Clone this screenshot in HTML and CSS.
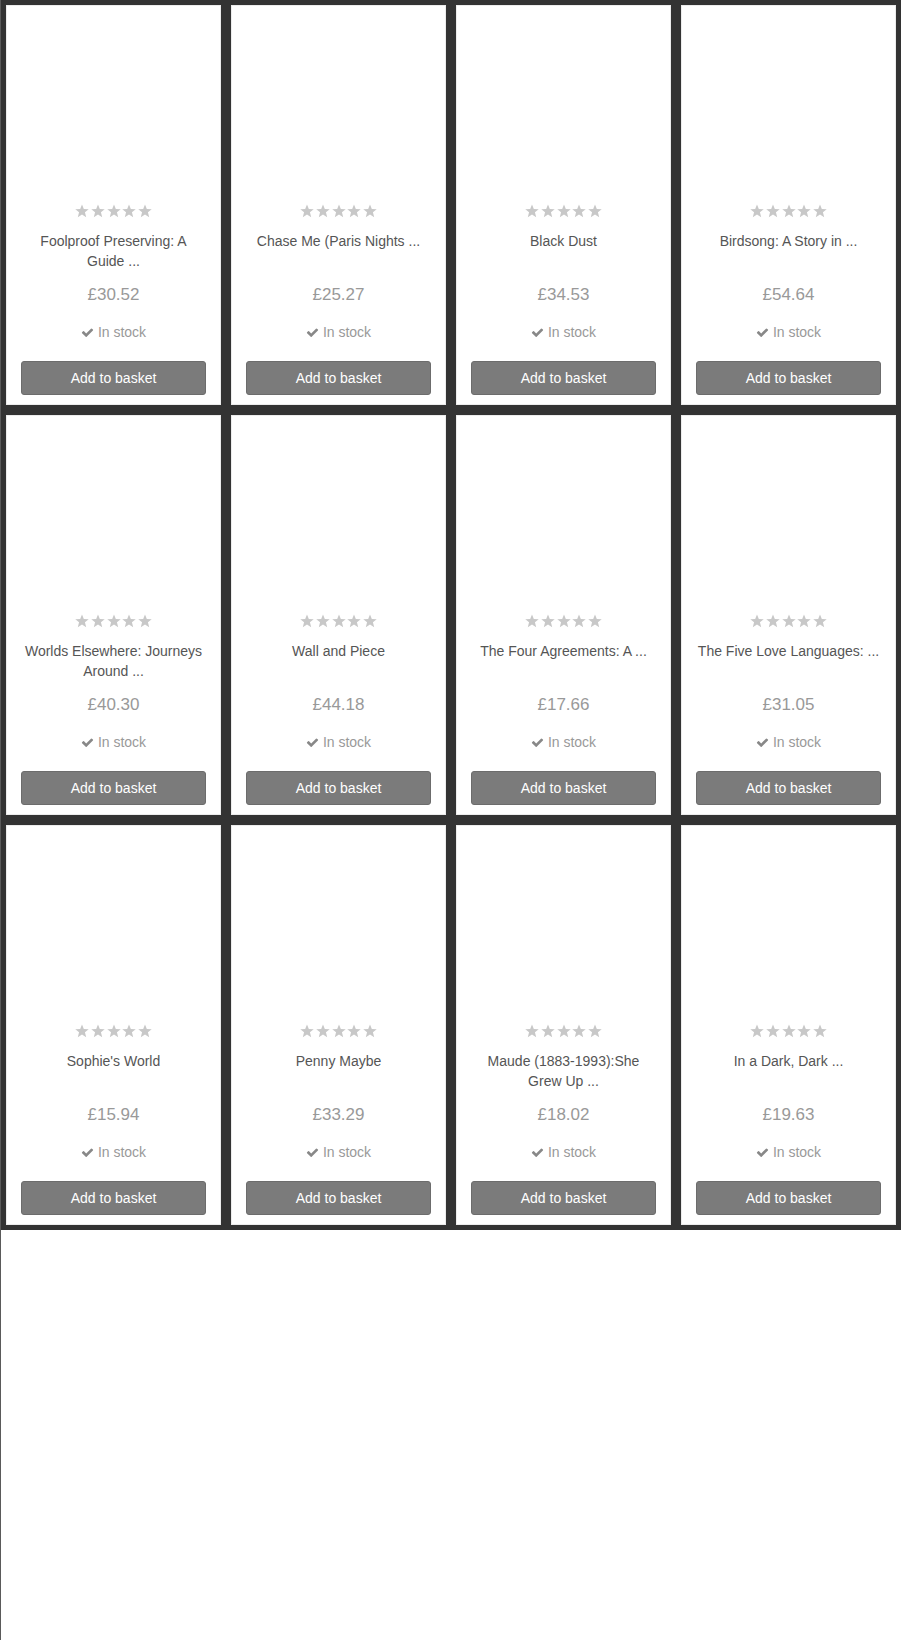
FILE: index.html
```html
<!DOCTYPE html>
<html lang="en">
<head>
<meta charset="utf-8">
<title>Books</title>
<link rel="stylesheet" href="styles.css">
</head>
<body>
<div class="page">
  <ol class="grid">
    <li class="card">
      <div class="stars"><svg viewBox="0 0 100 100"><polygon points="50,3 63,35 98,37 71,59 80,94 50,75 20,94 29,59 2,37 37,35"/></svg><svg viewBox="0 0 100 100"><polygon points="50,3 63,35 98,37 71,59 80,94 50,75 20,94 29,59 2,37 37,35"/></svg><svg viewBox="0 0 100 100"><polygon points="50,3 63,35 98,37 71,59 80,94 50,75 20,94 29,59 2,37 37,35"/></svg><svg viewBox="0 0 100 100"><polygon points="50,3 63,35 98,37 71,59 80,94 50,75 20,94 29,59 2,37 37,35"/></svg><svg viewBox="0 0 100 100"><polygon points="50,3 63,35 98,37 71,59 80,94 50,75 20,94 29,59 2,37 37,35"/></svg></div>
      <h3 class="title">Foolproof Preserving: A Guide ...</h3>
      <p class="price">£30.52</p>
      <p class="stock"><svg class="check" viewBox="0 0 1792 1792"><path d="M1671 566q0 40-28 68l-724 724-136 136q-28 28-68 28t-68-28l-136-136-362-362q-28-28-28-68t28-68l136-136q28-28 68-28t68 28l294 295 656-657q28-28 68-28t68 28l136 136q28 28 28 68z"/></svg>In stock</p>
      <button class="btn">Add to basket</button>
    </li>
    <li class="card">
      <div class="stars"><svg viewBox="0 0 100 100"><polygon points="50,3 63,35 98,37 71,59 80,94 50,75 20,94 29,59 2,37 37,35"/></svg><svg viewBox="0 0 100 100"><polygon points="50,3 63,35 98,37 71,59 80,94 50,75 20,94 29,59 2,37 37,35"/></svg><svg viewBox="0 0 100 100"><polygon points="50,3 63,35 98,37 71,59 80,94 50,75 20,94 29,59 2,37 37,35"/></svg><svg viewBox="0 0 100 100"><polygon points="50,3 63,35 98,37 71,59 80,94 50,75 20,94 29,59 2,37 37,35"/></svg><svg viewBox="0 0 100 100"><polygon points="50,3 63,35 98,37 71,59 80,94 50,75 20,94 29,59 2,37 37,35"/></svg></div>
      <h3 class="title">Chase Me (Paris Nights ...</h3>
      <p class="price">£25.27</p>
      <p class="stock"><svg class="check" viewBox="0 0 1792 1792"><path d="M1671 566q0 40-28 68l-724 724-136 136q-28 28-68 28t-68-28l-136-136-362-362q-28-28-28-68t28-68l136-136q28-28 68-28t68 28l294 295 656-657q28-28 68-28t68 28l136 136q28 28 28 68z"/></svg>In stock</p>
      <button class="btn">Add to basket</button>
    </li>
    <li class="card">
      <div class="stars"><svg viewBox="0 0 100 100"><polygon points="50,3 63,35 98,37 71,59 80,94 50,75 20,94 29,59 2,37 37,35"/></svg><svg viewBox="0 0 100 100"><polygon points="50,3 63,35 98,37 71,59 80,94 50,75 20,94 29,59 2,37 37,35"/></svg><svg viewBox="0 0 100 100"><polygon points="50,3 63,35 98,37 71,59 80,94 50,75 20,94 29,59 2,37 37,35"/></svg><svg viewBox="0 0 100 100"><polygon points="50,3 63,35 98,37 71,59 80,94 50,75 20,94 29,59 2,37 37,35"/></svg><svg viewBox="0 0 100 100"><polygon points="50,3 63,35 98,37 71,59 80,94 50,75 20,94 29,59 2,37 37,35"/></svg></div>
      <h3 class="title">Black Dust</h3>
      <p class="price">£34.53</p>
      <p class="stock"><svg class="check" viewBox="0 0 1792 1792"><path d="M1671 566q0 40-28 68l-724 724-136 136q-28 28-68 28t-68-28l-136-136-362-362q-28-28-28-68t28-68l136-136q28-28 68-28t68 28l294 295 656-657q28-28 68-28t68 28l136 136q28 28 28 68z"/></svg>In stock</p>
      <button class="btn">Add to basket</button>
    </li>
    <li class="card">
      <div class="stars"><svg viewBox="0 0 100 100"><polygon points="50,3 63,35 98,37 71,59 80,94 50,75 20,94 29,59 2,37 37,35"/></svg><svg viewBox="0 0 100 100"><polygon points="50,3 63,35 98,37 71,59 80,94 50,75 20,94 29,59 2,37 37,35"/></svg><svg viewBox="0 0 100 100"><polygon points="50,3 63,35 98,37 71,59 80,94 50,75 20,94 29,59 2,37 37,35"/></svg><svg viewBox="0 0 100 100"><polygon points="50,3 63,35 98,37 71,59 80,94 50,75 20,94 29,59 2,37 37,35"/></svg><svg viewBox="0 0 100 100"><polygon points="50,3 63,35 98,37 71,59 80,94 50,75 20,94 29,59 2,37 37,35"/></svg></div>
      <h3 class="title">Birdsong: A Story in ...</h3>
      <p class="price">£54.64</p>
      <p class="stock"><svg class="check" viewBox="0 0 1792 1792"><path d="M1671 566q0 40-28 68l-724 724-136 136q-28 28-68 28t-68-28l-136-136-362-362q-28-28-28-68t28-68l136-136q28-28 68-28t68 28l294 295 656-657q28-28 68-28t68 28l136 136q28 28 28 68z"/></svg>In stock</p>
      <button class="btn">Add to basket</button>
    </li>
    <li class="card">
      <div class="stars"><svg viewBox="0 0 100 100"><polygon points="50,3 63,35 98,37 71,59 80,94 50,75 20,94 29,59 2,37 37,35"/></svg><svg viewBox="0 0 100 100"><polygon points="50,3 63,35 98,37 71,59 80,94 50,75 20,94 29,59 2,37 37,35"/></svg><svg viewBox="0 0 100 100"><polygon points="50,3 63,35 98,37 71,59 80,94 50,75 20,94 29,59 2,37 37,35"/></svg><svg viewBox="0 0 100 100"><polygon points="50,3 63,35 98,37 71,59 80,94 50,75 20,94 29,59 2,37 37,35"/></svg><svg viewBox="0 0 100 100"><polygon points="50,3 63,35 98,37 71,59 80,94 50,75 20,94 29,59 2,37 37,35"/></svg></div>
      <h3 class="title">Worlds Elsewhere: Journeys Around ...</h3>
      <p class="price">£40.30</p>
      <p class="stock"><svg class="check" viewBox="0 0 1792 1792"><path d="M1671 566q0 40-28 68l-724 724-136 136q-28 28-68 28t-68-28l-136-136-362-362q-28-28-28-68t28-68l136-136q28-28 68-28t68 28l294 295 656-657q28-28 68-28t68 28l136 136q28 28 28 68z"/></svg>In stock</p>
      <button class="btn">Add to basket</button>
    </li>
    <li class="card">
      <div class="stars"><svg viewBox="0 0 100 100"><polygon points="50,3 63,35 98,37 71,59 80,94 50,75 20,94 29,59 2,37 37,35"/></svg><svg viewBox="0 0 100 100"><polygon points="50,3 63,35 98,37 71,59 80,94 50,75 20,94 29,59 2,37 37,35"/></svg><svg viewBox="0 0 100 100"><polygon points="50,3 63,35 98,37 71,59 80,94 50,75 20,94 29,59 2,37 37,35"/></svg><svg viewBox="0 0 100 100"><polygon points="50,3 63,35 98,37 71,59 80,94 50,75 20,94 29,59 2,37 37,35"/></svg><svg viewBox="0 0 100 100"><polygon points="50,3 63,35 98,37 71,59 80,94 50,75 20,94 29,59 2,37 37,35"/></svg></div>
      <h3 class="title">Wall and Piece</h3>
      <p class="price">£44.18</p>
      <p class="stock"><svg class="check" viewBox="0 0 1792 1792"><path d="M1671 566q0 40-28 68l-724 724-136 136q-28 28-68 28t-68-28l-136-136-362-362q-28-28-28-68t28-68l136-136q28-28 68-28t68 28l294 295 656-657q28-28 68-28t68 28l136 136q28 28 28 68z"/></svg>In stock</p>
      <button class="btn">Add to basket</button>
    </li>
    <li class="card">
      <div class="stars"><svg viewBox="0 0 100 100"><polygon points="50,3 63,35 98,37 71,59 80,94 50,75 20,94 29,59 2,37 37,35"/></svg><svg viewBox="0 0 100 100"><polygon points="50,3 63,35 98,37 71,59 80,94 50,75 20,94 29,59 2,37 37,35"/></svg><svg viewBox="0 0 100 100"><polygon points="50,3 63,35 98,37 71,59 80,94 50,75 20,94 29,59 2,37 37,35"/></svg><svg viewBox="0 0 100 100"><polygon points="50,3 63,35 98,37 71,59 80,94 50,75 20,94 29,59 2,37 37,35"/></svg><svg viewBox="0 0 100 100"><polygon points="50,3 63,35 98,37 71,59 80,94 50,75 20,94 29,59 2,37 37,35"/></svg></div>
      <h3 class="title">The Four Agreements: A ...</h3>
      <p class="price">£17.66</p>
      <p class="stock"><svg class="check" viewBox="0 0 1792 1792"><path d="M1671 566q0 40-28 68l-724 724-136 136q-28 28-68 28t-68-28l-136-136-362-362q-28-28-28-68t28-68l136-136q28-28 68-28t68 28l294 295 656-657q28-28 68-28t68 28l136 136q28 28 28 68z"/></svg>In stock</p>
      <button class="btn">Add to basket</button>
    </li>
    <li class="card">
      <div class="stars"><svg viewBox="0 0 100 100"><polygon points="50,3 63,35 98,37 71,59 80,94 50,75 20,94 29,59 2,37 37,35"/></svg><svg viewBox="0 0 100 100"><polygon points="50,3 63,35 98,37 71,59 80,94 50,75 20,94 29,59 2,37 37,35"/></svg><svg viewBox="0 0 100 100"><polygon points="50,3 63,35 98,37 71,59 80,94 50,75 20,94 29,59 2,37 37,35"/></svg><svg viewBox="0 0 100 100"><polygon points="50,3 63,35 98,37 71,59 80,94 50,75 20,94 29,59 2,37 37,35"/></svg><svg viewBox="0 0 100 100"><polygon points="50,3 63,35 98,37 71,59 80,94 50,75 20,94 29,59 2,37 37,35"/></svg></div>
      <h3 class="title">The Five Love Languages: ...</h3>
      <p class="price">£31.05</p>
      <p class="stock"><svg class="check" viewBox="0 0 1792 1792"><path d="M1671 566q0 40-28 68l-724 724-136 136q-28 28-68 28t-68-28l-136-136-362-362q-28-28-28-68t28-68l136-136q28-28 68-28t68 28l294 295 656-657q28-28 68-28t68 28l136 136q28 28 28 68z"/></svg>In stock</p>
      <button class="btn">Add to basket</button>
    </li>
    <li class="card">
      <div class="stars"><svg viewBox="0 0 100 100"><polygon points="50,3 63,35 98,37 71,59 80,94 50,75 20,94 29,59 2,37 37,35"/></svg><svg viewBox="0 0 100 100"><polygon points="50,3 63,35 98,37 71,59 80,94 50,75 20,94 29,59 2,37 37,35"/></svg><svg viewBox="0 0 100 100"><polygon points="50,3 63,35 98,37 71,59 80,94 50,75 20,94 29,59 2,37 37,35"/></svg><svg viewBox="0 0 100 100"><polygon points="50,3 63,35 98,37 71,59 80,94 50,75 20,94 29,59 2,37 37,35"/></svg><svg viewBox="0 0 100 100"><polygon points="50,3 63,35 98,37 71,59 80,94 50,75 20,94 29,59 2,37 37,35"/></svg></div>
      <h3 class="title">Sophie's World</h3>
      <p class="price">£15.94</p>
      <p class="stock"><svg class="check" viewBox="0 0 1792 1792"><path d="M1671 566q0 40-28 68l-724 724-136 136q-28 28-68 28t-68-28l-136-136-362-362q-28-28-28-68t28-68l136-136q28-28 68-28t68 28l294 295 656-657q28-28 68-28t68 28l136 136q28 28 28 68z"/></svg>In stock</p>
      <button class="btn">Add to basket</button>
    </li>
    <li class="card">
      <div class="stars"><svg viewBox="0 0 100 100"><polygon points="50,3 63,35 98,37 71,59 80,94 50,75 20,94 29,59 2,37 37,35"/></svg><svg viewBox="0 0 100 100"><polygon points="50,3 63,35 98,37 71,59 80,94 50,75 20,94 29,59 2,37 37,35"/></svg><svg viewBox="0 0 100 100"><polygon points="50,3 63,35 98,37 71,59 80,94 50,75 20,94 29,59 2,37 37,35"/></svg><svg viewBox="0 0 100 100"><polygon points="50,3 63,35 98,37 71,59 80,94 50,75 20,94 29,59 2,37 37,35"/></svg><svg viewBox="0 0 100 100"><polygon points="50,3 63,35 98,37 71,59 80,94 50,75 20,94 29,59 2,37 37,35"/></svg></div>
      <h3 class="title">Penny Maybe</h3>
      <p class="price">£33.29</p>
      <p class="stock"><svg class="check" viewBox="0 0 1792 1792"><path d="M1671 566q0 40-28 68l-724 724-136 136q-28 28-68 28t-68-28l-136-136-362-362q-28-28-28-68t28-68l136-136q28-28 68-28t68 28l294 295 656-657q28-28 68-28t68 28l136 136q28 28 28 68z"/></svg>In stock</p>
      <button class="btn">Add to basket</button>
    </li>
    <li class="card">
      <div class="stars"><svg viewBox="0 0 100 100"><polygon points="50,3 63,35 98,37 71,59 80,94 50,75 20,94 29,59 2,37 37,35"/></svg><svg viewBox="0 0 100 100"><polygon points="50,3 63,35 98,37 71,59 80,94 50,75 20,94 29,59 2,37 37,35"/></svg><svg viewBox="0 0 100 100"><polygon points="50,3 63,35 98,37 71,59 80,94 50,75 20,94 29,59 2,37 37,35"/></svg><svg viewBox="0 0 100 100"><polygon points="50,3 63,35 98,37 71,59 80,94 50,75 20,94 29,59 2,37 37,35"/></svg><svg viewBox="0 0 100 100"><polygon points="50,3 63,35 98,37 71,59 80,94 50,75 20,94 29,59 2,37 37,35"/></svg></div>
      <h3 class="title">Maude (1883-1993):She Grew Up ...</h3>
      <p class="price">£18.02</p>
      <p class="stock"><svg class="check" viewBox="0 0 1792 1792"><path d="M1671 566q0 40-28 68l-724 724-136 136q-28 28-68 28t-68-28l-136-136-362-362q-28-28-28-68t28-68l136-136q28-28 68-28t68 28l294 295 656-657q28-28 68-28t68 28l136 136q28 28 28 68z"/></svg>In stock</p>
      <button class="btn">Add to basket</button>
    </li>
    <li class="card">
      <div class="stars"><svg viewBox="0 0 100 100"><polygon points="50,3 63,35 98,37 71,59 80,94 50,75 20,94 29,59 2,37 37,35"/></svg><svg viewBox="0 0 100 100"><polygon points="50,3 63,35 98,37 71,59 80,94 50,75 20,94 29,59 2,37 37,35"/></svg><svg viewBox="0 0 100 100"><polygon points="50,3 63,35 98,37 71,59 80,94 50,75 20,94 29,59 2,37 37,35"/></svg><svg viewBox="0 0 100 100"><polygon points="50,3 63,35 98,37 71,59 80,94 50,75 20,94 29,59 2,37 37,35"/></svg><svg viewBox="0 0 100 100"><polygon points="50,3 63,35 98,37 71,59 80,94 50,75 20,94 29,59 2,37 37,35"/></svg></div>
      <h3 class="title">In a Dark, Dark ...</h3>
      <p class="price">£19.63</p>
      <p class="stock"><svg class="check" viewBox="0 0 1792 1792"><path d="M1671 566q0 40-28 68l-724 724-136 136q-28 28-68 28t-68-28l-136-136-362-362q-28-28-28-68t28-68l136-136q28-28 68-28t68 28l294 295 656-657q28-28 68-28t68 28l136 136q28 28 28 68z"/></svg>In stock</p>
      <button class="btn">Add to basket</button>
    </li>
  </ol>
</div>
</body>
</html>
```
FILE: styles.css
```css
html, body {
  margin: 0;
  padding: 0;
  background: #ffffff;
}

body {
  font-family: "Liberation Sans", Arial, Helvetica, sans-serif;
}

.page {
  border-left: 1px solid #5a5a5a;
  min-height: 1640px;
  box-sizing: border-box;
}

.grid {
  list-style: none;
  margin: 0;
  padding: 5px;
  width: 900px;
  box-sizing: border-box;
  display: grid;
  grid-template-columns: repeat(4, 215px);
  grid-auto-rows: 400px;
  gap: 10px;
  background: #333333;
}

.card {
  background: #ffffff;
  box-shadow: inset 0 0 0 1px #ececec;
  display: flex;
  flex-direction: column;
  align-items: center;
  padding: 0 15px;
  box-sizing: border-box;
  height: 400px;
}

.stars {
  margin-top: 199px;
  height: 14px;
  display: flex;
  gap: 1.6px;
}

.stars svg {
  width: 14px;
  height: 14px;
  fill: #c8c8c8;
}

.title {
  margin: 13px 0 0;
  height: 40px;
  width: 100%;
  font-size: 14px;
  line-height: 20px;
  font-weight: normal;
  color: #555555;
  text-align: center;
}

.price {
  margin: 12px 0 0;
  font-size: 17px;
  line-height: 24px;
  color: #999999;
}

.stock {
  margin: 15px 0 0;
  font-size: 14px;
  line-height: 20px;
  color: #999999;
  display: flex;
  align-items: center;
  gap: 4px;
}

.check {
  width: 13px;
  height: 13px;
  fill: #888888;
}

.btn {
  margin-top: 19px;
  width: 100%;
  height: 34px;
  background: #7b7b7b;
  border: 1px solid #6c6c6c;
  border-radius: 3px;
  color: #ffffff;
  font-family: "Liberation Sans", Arial, Helvetica, sans-serif;
  font-size: 14px;
  padding: 0;
}
```
